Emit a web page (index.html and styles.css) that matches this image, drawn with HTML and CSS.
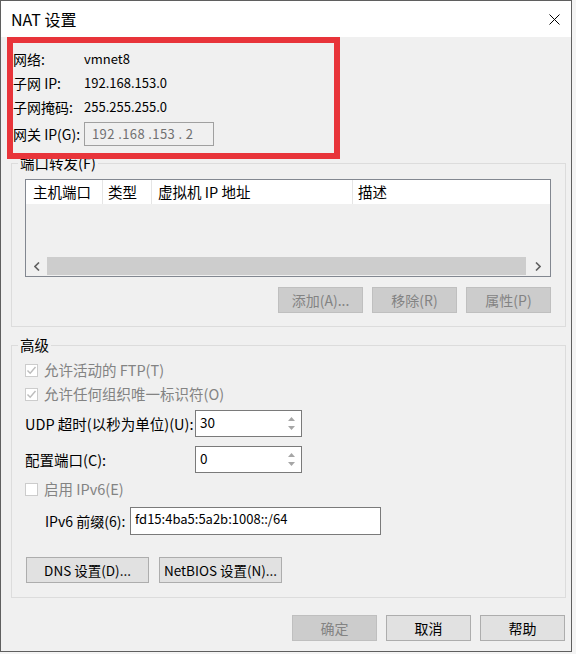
FILE: index.html
```html
<!DOCTYPE html>
<html lang="zh-CN">
<head>
    <meta charset="UTF-8">
    <meta name="viewport" content="width=device-width, initial-scale=1.0">
    <title>NAT 设置</title>
    <link rel="stylesheet" href="styles.css">
</head>
<body>
    <div class="window">
        <div class="titlebar">
            <span class="title">NAT 设置</span>
            <svg class="close" width="11" height="11" viewBox="0 0 11 11">
                <path d="M0.5 0.5 L10.5 10.5 M10.5 0.5 L0.5 10.5" stroke="#000" stroke-width="1" fill="none"/>
            </svg>
        </div>

        <div class="client">
            <!-- 网络信息 -->
            <div class="info">
                <div class="info-row"><span class="info-label">网络:</span><span class="info-value">vmnet8</span></div>
                <div class="info-row"><span class="info-label">子网 IP:</span><span class="info-value">192.168.153.0</span></div>
                <div class="info-row"><span class="info-label">子网掩码:</span><span class="info-value">255.255.255.0</span></div>
                <div class="info-row gw-row">
                    <span class="info-label">网关 IP(G):</span>
                    <div class="ip-box">192 .168 .153 . 2</div>
                </div>
            </div>

            <!-- 端口转发 -->
            <div class="group ports">
                <div class="group-title">端口转发(F)</div>
                <div class="list">
                    <div class="list-head">
                        <div class="col col-port">主机端口</div>
                        <div class="col col-type">类型</div>
                        <div class="col col-ip">虚拟机 IP 地址</div>
                        <div class="col col-desc">描述</div>
                    </div>
                    <div class="list-body"></div>
                    <div class="hscroll">
                        <div class="sb-btn">
                            <svg width="6" height="9" viewBox="0 0 6 9"><polyline points="5,0.5 1,4.5 5,8.5" fill="none" stroke="#606060" stroke-width="1.6"/></svg>
                        </div>
                        <div class="sb-thumb"></div>
                        <div class="sb-btn sb-right">
                            <svg width="6" height="9" viewBox="0 0 6 9"><polyline points="1,0.5 5,4.5 1,8.5" fill="none" stroke="#606060" stroke-width="1.6"/></svg>
                        </div>
                    </div>
                </div>
                <div class="btn-row">
                    <div class="btn off">添加(A)...</div>
                    <div class="btn off">移除(R)</div>
                    <div class="btn off">属性(P)</div>
                </div>
            </div>

            <!-- 高级 -->
            <div class="group advanced">
                <div class="group-title">高级</div>
                <div class="check-row first">
                    <span class="checkbox">
                        <svg width="11" height="11" viewBox="0 0 11 11"><polyline points="1.5,5.5 4.2,8.3 9.5,2" fill="none" stroke="#bcbcbc" stroke-width="1.4"/></svg>
                    </span>
                    <span class="muted">允许活动的 FTP(T)</span>
                </div>
                <div class="check-row">
                    <span class="checkbox">
                        <svg width="11" height="11" viewBox="0 0 11 11"><polyline points="1.5,5.5 4.2,8.3 9.5,2" fill="none" stroke="#bcbcbc" stroke-width="1.4"/></svg>
                    </span>
                    <span class="muted">允许任何组织唯一标识符(O)</span>
                </div>

                <div class="field-row udp-row">
                    <span class="field-label">UDP 超时(以秒为单位)(U):</span>
                    <div class="spin">
                        <div class="spin-val">30</div>
                        <div class="spin-arrows">
                            <svg width="7" height="4" viewBox="0 0 7 4"><polygon points="0,4 3.5,0 7,4" fill="#a6a6a6"/></svg>
                            <svg width="7" height="4" viewBox="0 0 7 4"><polygon points="0,0 3.5,4 7,0" fill="#a6a6a6"/></svg>
                        </div>
                    </div>
                </div>
                <div class="field-row port-row">
                    <span class="field-label">配置端口(C):</span>
                    <div class="spin">
                        <div class="spin-val">0</div>
                        <div class="spin-arrows">
                            <svg width="7" height="4" viewBox="0 0 7 4"><polygon points="0,4 3.5,0 7,4" fill="#a6a6a6"/></svg>
                            <svg width="7" height="4" viewBox="0 0 7 4"><polygon points="0,0 3.5,4 7,0" fill="#a6a6a6"/></svg>
                        </div>
                    </div>
                </div>

                <div class="check-row ipv6-check">
                    <span class="checkbox"></span>
                    <span class="muted">启用 IPv6(E)</span>
                </div>
                <div class="field-row prefix-row">
                    <span class="prefix-label">IPv6 前缀(6):</span>
                    <div class="text-box">fd15:4ba5:5a2b:1008::/64</div>
                </div>

                <div class="setting-btns">
                    <div class="btn wide">DNS 设置(D)...</div>
                    <div class="btn wide">NetBIOS 设置(N)...</div>
                </div>
            </div>

            <div class="dialog-btns">
                <div class="btn off">确定</div>
                <div class="btn">取消</div>
                <div class="btn">帮助</div>
            </div>
        </div>

        <!-- 红色标注框 -->
        <div class="mark"></div>
    </div>
</body>
</html>
```

FILE: styles.css
```css
* {
    box-sizing: border-box;
    margin: 0;
    padding: 0;
}

body {
    font-family: "Noto Sans CJK SC", "Noto Sans", sans-serif;
    font-size: 14.5px;
    line-height: 18px;
    color: #000;
    background: #f4f4f4;
}

.window {
    position: relative;
    width: 572px;
    height: 652px;
    border: 1px solid #5f5f5f;
    background: #f0f0f0;
}

.titlebar {
    height: 36px;
    background: #fff;
    display: flex;
    align-items: center;
    justify-content: space-between;
    padding: 0 11px 0 10px;
}

.title {
    font-size: 16px;
}

.client {
    padding: 10px 5px 0 10px;
}

/* 网络信息 */
.info {
    padding-left: 2px;
    font-size: 14px;
}

.info-row {
    height: 24px;
    display: flex;
    align-items: center;
    white-space: nowrap;
}

.info-label {
    width: 71px;
}

.info-value {
    font-size: 13px;
}

.gw-row {
    margin-top: 3px;
}

.ip-box {
    width: 130px;
    height: 24px;
    border: 1px solid #a0a0a0;
    padding-left: 7px;
    color: #707070;
    font-size: 13px;
    letter-spacing: 0.4px;
    display: flex;
    align-items: center;
}

/* 分组框 */
.group {
    border: 1px solid #dcdcdc;
    padding: 0 14px 13px 13px;
}

.ports {
    margin-top: 17px;
}

.advanced {
    margin-top: 18px;
    padding-bottom: 14px;
}

.group-title {
    width: fit-content;
    margin: -10px 0 0 -7px;
    padding: 0 2px;
    background: #f0f0f0;
}

/* 列表 */
.list {
    margin-top: 7px;
    height: 98px;
    border: 1px solid #828790;
    background: #f0f0f0;
}

.list-head {
    height: 24px;
    background: #fff;
    display: flex;
}

.col {
    border-right: 1px solid #e5e5e5;
    padding-left: 6px;
    display: flex;
    align-items: center;
    white-space: nowrap;
}

.col-port {
    width: 77px;
    padding-left: 7px;
}

.col-type {
    width: 49px;
    padding-left: 5px;
}

.col-ip {
    width: 201px;
}

.col-desc {
    flex: 1;
    border-right: none;
    padding-left: 5px;
}

.list-body {
    height: 52px;
}

.hscroll {
    height: 20px;
    display: flex;
}

.sb-btn {
    width: 21px;
    display: flex;
    align-items: center;
    justify-content: center;
}

.sb-right {
    width: 24px;
}

.sb-thumb {
    flex: 1;
    background: #cdcdcd;
    margin: 1px 0;
}

/* 按钮 */
.btn {
    width: 85px;
    height: 26px;
    border: 1px solid #adadad;
    background: #e1e1e1;
    font-size: 14px;
    white-space: nowrap;
    display: flex;
    align-items: center;
    justify-content: center;
}

.btn.off {
    background: #cccccc;
    border-color: #bfbfbf;
    color: #838383;
}

.btn-row {
    margin-top: 10px;
    display: flex;
    justify-content: flex-end;
    gap: 9px;
}

/* 复选框 */
.check-row {
    height: 24px;
    display: flex;
    align-items: center;
}

.check-row.first {
    margin-top: 4px;
}

.checkbox {
    width: 13px;
    height: 13px;
    border: 1px solid #cccccc;
    background: #fff;
    margin-right: 6px;
    display: flex;
    align-items: center;
    justify-content: center;
}

.muted {
    color: #838383;
}

/* 输入行 */
.field-row {
    display: flex;
    align-items: center;
    white-space: nowrap;
}

.udp-row {
    margin-top: 4px;
}

.port-row {
    margin-top: 9px;
}

.ipv6-check {
    margin-top: 4px;
}

.prefix-row {
    margin-top: 6px;
    padding-left: 20px;
}

.field-label {
    width: 170px;
}

.spin {
    width: 107px;
    height: 27px;
    border: 1px solid #7a7a7a;
    background: #fff;
    display: flex;
}

.spin-val {
    flex: 1;
    font-size: 13.5px;
    padding: 2px 0 0 4px;
}

.spin-arrows {
    width: 19px;
    display: flex;
    flex-direction: column;
    align-items: center;
    justify-content: space-around;
    padding: 4px 0;
}

.prefix-label {
    width: 85px;
    font-size: 14px;
}

.text-box {
    width: 251px;
    height: 28px;
    border: 1px solid #7a7a7a;
    background: #fff;
    font-size: 13px;
    padding: 2px 0 0 4px;
}

.setting-btns {
    margin-top: 22px;
    padding-left: 1px;
    display: flex;
    gap: 10px;
}

.btn.wide {
    width: 123px;
    font-size: 13.5px;
}

.dialog-btns {
    margin-top: 17px;
    padding-right: 1px;
    display: flex;
    justify-content: flex-end;
    gap: 9px;
}

/* 红色标注框 */
.mark {
    position: absolute;
    left: 6px;
    top: 36px;
    width: 333px;
    height: 122px;
    border: 6px solid #e8343a;
}
```
